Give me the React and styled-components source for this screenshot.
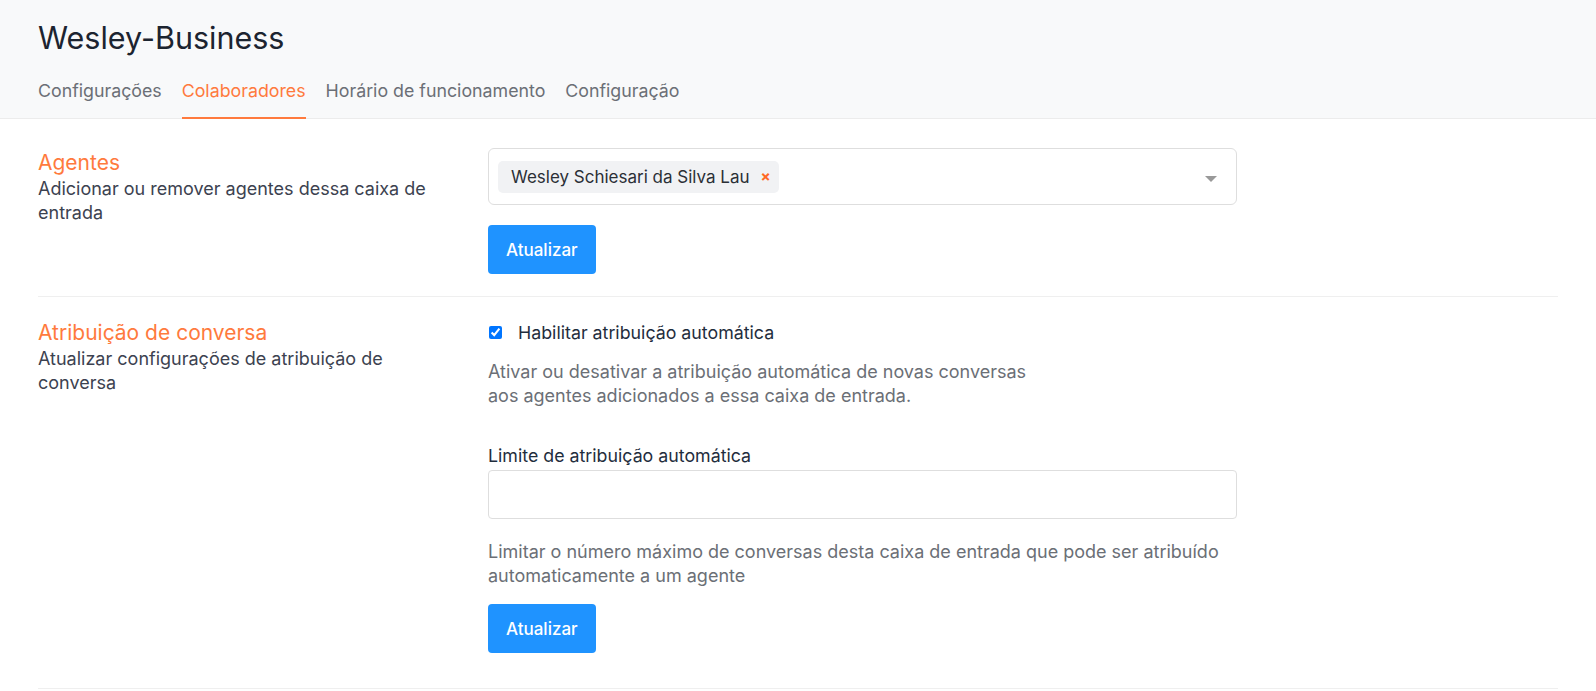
import React from 'react';
import styled, { createGlobalStyle } from 'styled-components';

const GlobalStyle = createGlobalStyle`
  html, body {
    margin: 0;
    padding: 0;
    background: #ffffff;
    font-family: Inter, 'Noto Sans', sans-serif;
    color: #1f2d3d;
    -webkit-font-smoothing: antialiased;
  }
  * { box-sizing: border-box; }
`;

const Page = styled.div`
  min-height: 691px;
  background: #fff;
`;

const Header = styled.header`
  background: #f8f9fa;
  border-bottom: 1px solid #ececec;
  padding: 18px 38px 0;
`;

const Title = styled.h1`
  margin: 0;
  font-size: 30.5px;
  font-weight: 400;
  line-height: 40px;
  color: #1c2430;
`;

const Tabs = styled.nav`
  display: flex;
  gap: 20px;
  margin-top: 12px;
`;

const Tab = styled.a`
  font-size: 17.8px;
  line-height: 24px;
  padding: 9px 0 14px;
  color: ${({ $active }) => ($active ? '#ff7a3d' : '#6b6f76')};
  border-bottom: 2px solid ${({ $active }) => ($active ? '#ff7a3d' : 'transparent')};
  margin-bottom: -1px;
  cursor: pointer;
`;

const Content = styled.main`
  padding: 0 38px;
`;

const Section = styled.section`
  display: grid;
  grid-template-columns: 410px 749px;
  column-gap: 40px;
  padding: ${({ $top }) => $top}px 0 ${({ $bottom }) => $bottom}px;
  border-bottom: 1px solid #efefef;
`;

const Intro = styled.div`
  padding-top: ${({ $offset }) => $offset || 0}px;
`;

const SectionTitle = styled.h2`
  margin: 0;
  font-size: 21px;
  font-weight: 400;
  line-height: 28px;
  color: #ff7a3d;
`;

const SectionText = styled.p`
  margin: 0;
  font-size: 18px;
  line-height: 24px;
  color: #3c4250;
`;

const Fields = styled.div`
  display: flex;
  flex-direction: column;
  align-items: flex-start;
`;

const Select = styled.div`
  width: 100%;
  height: 57px;
  border: 1px solid #dedede;
  border-radius: 6px;
  display: flex;
  align-items: center;
  justify-content: space-between;
  padding: 0 19px 0 9px;
  background: #fff;
`;

const Tag = styled.span`
  display: inline-flex;
  align-items: center;
  gap: 11px;
  height: 32px;
  padding: 0 8px 0 13px;
  background: #f1f2f4;
  border-radius: 5px;
  font-size: 17px;
  color: #2b2f36;
`;

const Remove = styled.span`
  color: #ff6a26;
  font-size: 15px;
  font-weight: 700;
  line-height: 1;
`;

const Caret = styled.span`
  width: 0;
  height: 0;
  border-left: 6px solid transparent;
  border-right: 6px solid transparent;
  border-top: 6px solid #999;
  margin-top: 4px;
`;

const Button = styled.button`
  height: 49px;
  padding: 0 18px;
  border: none;
  border-radius: 4px;
  background: #1f93ff;
  color: #fff;
  font-family: inherit;
  font-size: 17px;
  font-weight: 500;
  margin-top: ${({ $top }) => $top}px;
  cursor: pointer;
`;

const CheckRow = styled.label`
  display: flex;
  align-items: center;
  gap: 16px;
  height: 26px;
  font-size: 17.8px;
  color: #1f2d3d;
`;

const Checkbox = styled.input`
  margin: 0 0 0 1px;
  width: 13px;
  height: 13px;
`;

const Help = styled.p`
  margin: ${({ $top }) => $top}px 0 0;
  font-size: 18px;
  line-height: 24px;
  color: #6b6f76;
`;

const FieldLabel = styled.div`
  margin-top: 36px;
  font-size: 17.8px;
  line-height: 24px;
  color: #1f2d3d;
`;

const TextInput = styled.input`
  width: 100%;
  height: 49px;
  margin-top: 2px;
  border: 1px solid #dedede;
  border-radius: 4px;
  padding: 0 12px;
  font-family: inherit;
  font-size: 17px;
  outline: none;
`;

export default function App() {
  return (
    <Page>
      <GlobalStyle />
      <Header>
        <Title>Wesley-Business</Title>
        <Tabs>
          <Tab>Configurações</Tab>
          <Tab $active>Colaboradores</Tab>
          <Tab>Horário de funcionamento</Tab>
          <Tab>Configuração</Tab>
        </Tabs>
      </Header>
      <Content>
        <Section $top={29} $bottom={22}>
          <Intro $offset={1}>
            <SectionTitle>Agentes</SectionTitle>
            <SectionText>Adicionar ou remover agentes dessa caixa de entrada</SectionText>
          </Intro>
          <Fields>
            <Select>
              <Tag>
                Wesley Schiesari da Silva Lau
                <Remove>×</Remove>
              </Tag>
              <Caret />
            </Select>
            <Button $top={20}>Atualizar</Button>
          </Fields>
        </Section>
        <Section $top={22} $bottom={35}>
          <Intro>
            <SectionTitle>Atribuição de conversa</SectionTitle>
            <SectionText>Atualizar configurações de atribuição de conversa</SectionText>
          </Intro>
          <Fields>
            <CheckRow>
              <Checkbox type="checkbox" defaultChecked />
              Habilitar atribuição automática
            </CheckRow>
            <Help $top={15}>
              Ativar ou desativar a atribuição automática de novas conversas
              <br />
              aos agentes adicionados a essa caixa de entrada.
            </Help>
            <FieldLabel>Limite de atribuição automática</FieldLabel>
            <TextInput type="text" />
            <Help $top={21}>
              Limitar o número máximo de conversas desta caixa de entrada que pode ser atribuído automaticamente a um agente
            </Help>
            <Button $top={16}>Atualizar</Button>
          </Fields>
        </Section>
      </Content>
    </Page>
  );
}
